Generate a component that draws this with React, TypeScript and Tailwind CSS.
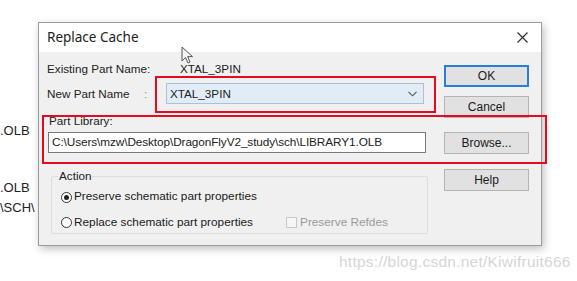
const ui = "font-['Liberation_Sans',Arial,sans-serif]";

function Btn({ label, primary }: { label: string; primary?: boolean }) {
  return (
    <div
      className={
        "h-[22px] w-[85px] flex items-center justify-center bg-[#e1e1e1] text-[12px] text-[#1a1a1a] " +
        (primary ? "border-2 border-[#2a7fd4]" : "border border-[#b4b4b4]")
      }
    >
      {label}
    </div>
  );
}

function Radio({ checked, label }: { checked?: boolean; label: string }) {
  return (
    <div className="flex items-center h-[16px]">
      <span className="ml-[9px] w-[11px] h-[11px] rounded-full border border-[#333] bg-white flex items-center justify-center">
        {checked && <span className="w-[5px] h-[5px] rounded-full bg-[#222]" />}
      </span>
      <span className="ml-[2px] text-[11.8px] text-[#1a1a1a]">{label}</span>
    </div>
  );
}

export default function App() {
  return (
    <div className={"relative w-[577px] h-[281px] bg-white overflow-hidden " + ui}>
      {/* desktop text behind the dialog */}
      <div className="absolute left-0 top-[123px] text-[13px] text-[#222] leading-[16px]">.OLB</div>
      <div className="absolute left-0 top-[180px] text-[13px] text-[#222] leading-[16px]">.OLB</div>
      <div className="absolute left-0 top-[200px] text-[13px] text-[#222] leading-[16px]">\SCH\</div>

      {/* dialog window */}
      <div className="absolute left-[38px] top-[22px] w-[504px] border border-[#9c9c9c] bg-[#f0f0f0] shadow-[2px_3px_8px_rgba(0,0,0,0.25)]">
        <div className="h-[29px] bg-white flex items-center justify-between pl-[8px] pr-[13px]">
          <span className="text-[13.5px] text-[#222] font-['Noto_Sans',sans-serif]">Replace Cache</span>
          <svg width="11" height="11" viewBox="0 0 11 11">
            <path d="M0.5 0.5 L10.5 10.5 M10.5 0.5 L0.5 10.5" stroke="#333" strokeWidth="1.2" />
          </svg>
        </div>

        <div className="flex pl-[8px] pr-[12px] pb-[11px]">
          <div className="w-[379px] pt-[9px]">
            <div className="flex items-center h-[16px] text-[11.7px] text-[#222]">
              <span className="w-[133px]">Existing Part Name:</span>
              <span>XTAL_3PIN</span>
            </div>
            <div className="flex items-center mt-[6px] h-[21px] text-[11.7px] text-[#222]">
              <span className="w-[97px]">New Part Name</span>
              <span className="w-[22px] text-[#888]">:</span>
              <div className="w-[258px] h-[21px] flex items-center justify-between bg-[#e2ecf7] border border-[#a9c1db] pl-[3px] pr-[6px]">
                <span>XTAL_3PIN</span>
                <svg width="9" height="6" viewBox="0 0 9 6">
                  <path d="M0.5 0.8 L4.5 4.8 L8.5 0.8" fill="none" stroke="#555" strokeWidth="1.1" />
                </svg>
              </div>
            </div>
            <div className="mt-[10px] ml-[2px] h-[14px] flex items-center text-[11.7px] text-[#222]">Part Library:</div>
            <div className="mt-[4px] ml-[1px] h-[21px] w-[378px] bg-white border border-[#7a7a7a] flex items-center pl-[3px] text-[11.8px] text-[#222] tracking-[-0.1px]">
              C:\Users\mzw\Desktop\DragonFlyV2_study\sch\LIBRARY1.OLB
            </div>
            <fieldset className="mt-[16px] ml-[4px] w-[377px] h-[65px] border border-[#dcdcdc] rounded-[2px]">
              <legend className="ml-[6px] px-[1px] text-[11.7px] text-[#222] leading-[14px]">Action</legend>
              <div className="mt-[6px]">
                <Radio checked label="Preserve schematic part properties" />
                <div className="flex items-center mt-[9px]">
                  <Radio label="Replace schematic part properties" />
                  <span className="ml-[33px] w-[11px] h-[11px] border border-[#c8c8c8] bg-[#f6f6f6]" />
                  <span className="ml-[3px] text-[11.8px] text-[#9a9a9a]">Preserve Refdes</span>
                </div>
              </div>
            </fieldset>
          </div>

          <div className="ml-[18px] pt-[13px] flex flex-col">
            <Btn primary label="OK" />
            <div className="mt-[9px]"><Btn label="Cancel" /></div>
            <div className="mt-[14px]"><Btn label="Browse..." /></div>
            <div className="mt-[15px]"><Btn label="Help" /></div>
          </div>
        </div>
      </div>

      {/* red annotation boxes */}
      <div className="absolute left-[155px] top-[76px] w-[281px] h-[37px] border-2 border-[#e60a1e]" />
      <div className="absolute left-[42px] top-[115px] w-[505px] h-[49px] border-2 border-[#e60a1e]" />

      {/* mouse cursor */}
      <svg className="absolute left-[181px] top-[46px]" width="13" height="19" viewBox="0 0 13 19">
        <path d="M1 1 L1 15 L4.5 11.5 L7 17 L9 16 L6.6 10.6 L11.5 10.6 Z" fill="#f4f4f4" stroke="#555" strokeWidth="1" strokeLinejoin="round" />
      </svg>

      {/* watermark */}
      <div className="absolute left-[339px] top-[252px] text-[15.5px] tracking-[0.25px] leading-[19px] text-[#d6d6d6]">
        https://blog.csdn.net/Kiwifruit666
      </div>
    </div>
  );
}
